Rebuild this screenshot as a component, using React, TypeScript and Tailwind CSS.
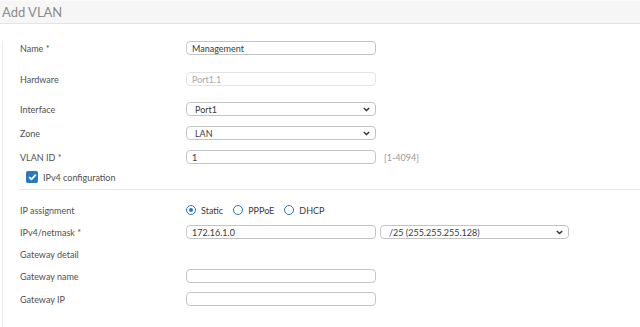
import React from "react";

const FONT = { fontFamily: 'Lato, "Noto Sans", Arial, sans-serif' };

function Chevron() {
  return (
    <svg width="7" height="5" viewBox="0 0 7 5" className="shrink-0">
      <path d="M0.8 0.9 L3.5 3.6 L6.2 0.9" fill="none" stroke="#333" strokeWidth="1.4" />
    </svg>
  );
}

function Box({ value, muted, select, w = "w-[190px]" }: { value?: string; muted?: boolean; select?: boolean; w?: string }) {
  return (
    <div
      className={`${w} h-[14px] rounded-[4px] border flex items-center justify-between ${
        muted ? "border-[#e3e3e3] text-[#a8a8a8]" : "border-[#c4c4c4] text-[#3a3a3a]"
      } ${select ? "pl-[8px] pr-[5px]" : "px-[5px]"} text-[9px] leading-none bg-white`}
    >
      <span>{value}</span>
      {select && <Chevron />}
    </div>
  );
}

function Row({ label, mt, children }: { label: string; mt: string; children?: React.ReactNode }) {
  return (
    <div className={`flex items-center h-[14px] ${mt}`}>
      <div className="w-[183px] pl-[17px] text-[9px] text-[#505050] leading-none">{label}</div>
      {children}
    </div>
  );
}

function Radio({ label, checked }: { label: string; checked?: boolean }) {
  return (
    <div className="flex items-center gap-[5px]">
      <div className="w-[10px] h-[10px] rounded-full border-[1.5px] border-[#2a78c2] flex items-center justify-center">
        {checked && <div className="w-[4px] h-[4px] rounded-full bg-[#2a78c2]" />}
      </div>
      <span className="text-[9px] text-[#3a3a3a] leading-none">{label}</span>
    </div>
  );
}

export default function App() {
  return (
    <div className="w-[640px] h-[327px] bg-white overflow-hidden" style={FONT}>
      <div className="h-[24px] bg-[#f6f6f6] border-t border-[#fbfbfb] border-b border-b-[#e4e4e4] flex items-center pl-[2px]">
        <span className="text-[13px] text-[#8c8c8c] leading-none">Add VLAN</span>
      </div>
      <div className="ml-[2px] h-[296px] border-l border-b border-[#ececec]">
        <Row label="Name *" mt="mt-[17px]">
          <Box value="Management" />
        </Row>
        <Row label="Hardware" mt="mt-[17px]">
          <Box value="Port1.1" muted />
        </Row>
        <Row label="Interface" mt="mt-[16px]">
          <Box value="Port1" select />
        </Row>
        <Row label="Zone" mt="mt-[10px]">
          <Box value="LAN" select />
        </Row>
        <Row label="VLAN ID *" mt="mt-[10px]">
          <Box value="1" />
          <span className="ml-[8px] text-[9px] text-[#999] leading-none">[1-4094]</span>
        </Row>
        <div className="flex items-center h-[12px] mt-[7px] pl-[23px] gap-[5px]">
          <div className="w-[12px] h-[12px] rounded-[2px] bg-[#2a78c2] flex items-center justify-center">
            <svg width="9" height="8" viewBox="0 0 9 8">
              <path d="M1.2 4.2 L3.5 6.3 L7.8 1.6" fill="none" stroke="#fff" strokeWidth="1.8" />
            </svg>
          </div>
          <span className="text-[9px] text-[#505050] leading-none">IPv4 configuration</span>
        </div>
        <div className="ml-[17px] mt-[6px] border-t border-[#e6e6e6]" />
        <Row label="IP assignment" mt="mt-[13px]">
          <div className="flex items-center gap-[10px]">
            <Radio label="Static" checked />
            <Radio label="PPPoE" />
            <Radio label="DHCP" />
          </div>
        </Row>
        <Row label="IPv4/netmask *" mt="mt-[8px]">
          <Box value="172.16.1.0" />
          <div className="ml-[4px]">
            <Box value="/25 (255.255.255.128)" select w="w-[189px]" />
          </div>
        </Row>
        <Row label="Gateway detail" mt="mt-[8px]" />
        <Row label="Gateway name" mt="mt-[8px]">
          <Box />
        </Row>
        <Row label="Gateway IP" mt="mt-[9px]">
          <Box />
        </Row>
      </div>
    </div>
  );
}
